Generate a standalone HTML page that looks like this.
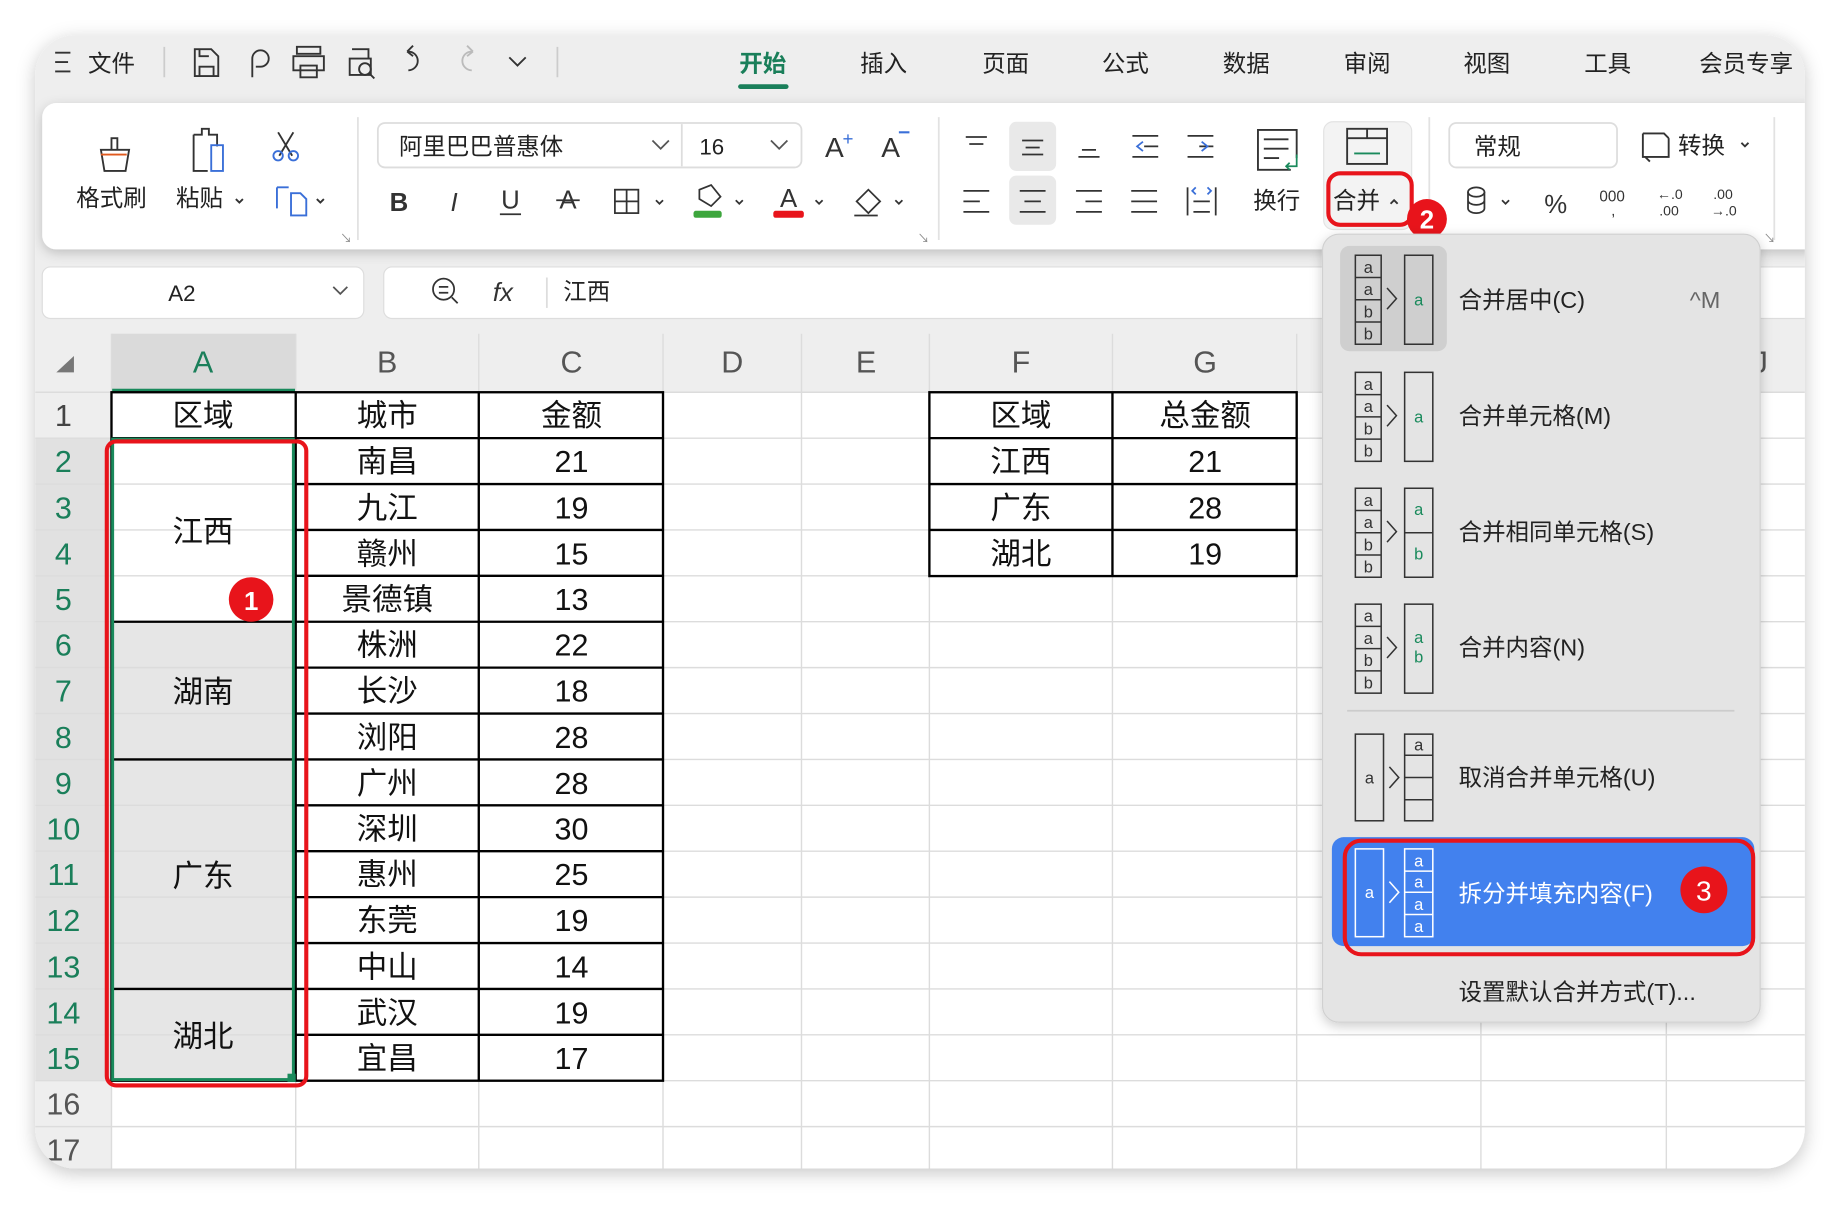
<!DOCTYPE html>
<html><head><meta charset="utf-8"><style>
html,body{margin:0;padding:0;background:#fff;width:1840px;height:1206px;overflow:hidden}
svg{display:block}
text{font-family:"Liberation Sans","Noto Sans CJK SC",sans-serif}
</style></head><body>
<svg width="1840" height="1206" viewBox="0 0 1568 1030" preserveAspectRatio="none" xmlns="http://www.w3.org/2000/svg">
<defs>
<filter id="sh" x="-5%" y="-5%" width="110%" height="110%"><feDropShadow dx="0" dy="4" stdDeviation="8" flood-color="#000" flood-opacity="0.22"/></filter>
<filter id="sh2" x="-10%" y="-10%" width="120%" height="120%"><feDropShadow dx="0" dy="3" stdDeviation="5" flood-color="#000" flood-opacity="0.2"/></filter>
<clipPath id="win"><rect x="30" y="30" width="1508" height="968" rx="34"/></clipPath>
</defs>
<rect width="1568" height="1030" fill="#fff"/>
<rect x="30" y="30" width="1508" height="968" rx="34" fill="#eeeeee" filter="url(#sh)"/>
<g clip-path="url(#win)">
<!-- grid white -->
<rect x="95" y="335" width="1450" height="670" fill="#fff"/>
<!-- row header highlight -->
<rect x="30" y="374" width="65" height="549" fill="#e1e1e1"/>
<rect x="95" y="285" width="157" height="50" fill="#dadada"/>
<rect x="95" y="332" width="157" height="3" fill="#1a8a5c"/>
<!-- merged gray cells -->
<rect x="95" y="531" width="157" height="392" fill="#e6e6e6"/>
<!-- grid lines -->
<g stroke="#dcdcdc" stroke-width="1.2">
<line x1="95" y1="285" x2="95" y2="1000"/>
<line x1="252" y1="285" x2="252" y2="1000"/><line x1="408" y1="285" x2="408" y2="1000"/><line x1="565" y1="285" x2="565" y2="1000"/><line x1="683" y1="285" x2="683" y2="1000"/><line x1="792" y1="285" x2="792" y2="1000"/><line x1="948" y1="285" x2="948" y2="1000"/><line x1="1105" y1="285" x2="1105" y2="1000"/><line x1="1262" y1="285" x2="1262" y2="1000"/><line x1="1420" y1="285" x2="1420" y2="1000"/>
<line x1="30" y1="335" x2="1540" y2="335"/>
<line x1="30" y1="374.2" x2="1540" y2="374.2"/><line x1="30" y1="413.4" x2="1540" y2="413.4"/><line x1="30" y1="452.6" x2="1540" y2="452.6"/><line x1="30" y1="491.8" x2="1540" y2="491.8"/><line x1="30" y1="531" x2="1540" y2="531"/><line x1="30" y1="570.2" x2="1540" y2="570.2"/><line x1="30" y1="609.4" x2="1540" y2="609.4"/><line x1="30" y1="648.6" x2="1540" y2="648.6"/><line x1="30" y1="687.8" x2="1540" y2="687.8"/><line x1="30" y1="727" x2="1540" y2="727"/><line x1="30" y1="766.2" x2="1540" y2="766.2"/><line x1="30" y1="805.4" x2="1540" y2="805.4"/><line x1="30" y1="844.6" x2="1540" y2="844.6"/><line x1="30" y1="883.8" x2="1540" y2="883.8"/><line x1="30" y1="923" x2="1540" y2="923"/><line x1="30" y1="962.2" x2="1540" y2="962.2"/>
</g>
<!-- table borders -->
<g stroke="#000" stroke-width="2">
<rect x="95" y="335" width="470" height="588" fill="none"/>
<line x1="252" y1="335" x2="252" y2="923"/><line x1="408" y1="335" x2="408" y2="923"/>
<line x1="252" y1="374.2" x2="565" y2="374.2"/><line x1="252" y1="413.4" x2="565" y2="413.4"/><line x1="252" y1="452.6" x2="565" y2="452.6"/><line x1="252" y1="491.8" x2="565" y2="491.8"/><line x1="95" y1="531" x2="565" y2="531"/><line x1="252" y1="570.2" x2="565" y2="570.2"/><line x1="252" y1="609.4" x2="565" y2="609.4"/><line x1="95" y1="648.6" x2="565" y2="648.6"/><line x1="252" y1="687.8" x2="565" y2="687.8"/><line x1="252" y1="727" x2="565" y2="727"/><line x1="252" y1="766.2" x2="565" y2="766.2"/><line x1="252" y1="805.4" x2="565" y2="805.4"/><line x1="95" y1="844.6" x2="565" y2="844.6"/><line x1="252" y1="883.8" x2="565" y2="883.8"/>
<line x1="95" y1="374.2" x2="252" y2="374.2"/>
<rect x="792" y="335" width="313" height="157" fill="none"/>
<line x1="948" y1="335" x2="948" y2="492"/><line x1="792" y1="374.2" x2="1105" y2="374.2"/><line x1="792" y1="413.4" x2="1105" y2="413.4"/><line x1="792" y1="452.6" x2="1105" y2="452.6"/>
</g>
<!-- selection -->
<rect x="96" y="375" width="154" height="547" fill="none" stroke="#1a8a5c" stroke-width="2.5"/>
<rect x="245" y="917" width="7" height="7" fill="#1a8a5c"/>
<rect x="91" y="377" width="170" height="550" rx="8" fill="none" stroke="#e8141b" stroke-width="3.5"/>
<!-- headers text -->
<g font-size="26" fill="#555" text-anchor="middle">
<text x="173" y="318" fill="#1a7f5a">A</text><text x="330" y="318">B</text><text x="487" y="318">C</text><text x="624" y="318">D</text><text x="738" y="318">E</text><text x="870" y="318">F</text><text x="1027" y="318">G</text><text x="1500" y="318">J</text>
</g>
<path d="M48 318 L63 304 L63 318 Z" fill="#777"/>
<g font-size="26" text-anchor="middle" fill="#1a7f5a">
<text x="54" y="364" fill="#444">1</text><text x="54" y="403">2</text><text x="54" y="443">3</text><text x="54" y="482">4</text><text x="54" y="521">5</text><text x="54" y="560">6</text><text x="54" y="599">7</text><text x="54" y="639">8</text><text x="54" y="678">9</text><text x="54" y="717">10</text><text x="54" y="756">11</text><text x="54" y="795">12</text><text x="54" y="835">13</text><text x="54" y="874">14</text><text x="54" y="913">15</text><text x="54" y="952" fill="#555">16</text><text x="54" y="991" fill="#555">17</text>
</g>
<g font-size="26" text-anchor="middle" fill="#111">
<text x="173" y="364">区域</text><text x="330" y="364">城市</text><text x="487" y="364">金额</text>
<text x="173" y="463">江西</text><text x="173" y="600">湖南</text><text x="173" y="757">广东</text><text x="173" y="894">湖北</text>
<text x="330" y="403">南昌</text><text x="487" y="403">21</text>
<text x="330" y="443">九江</text><text x="487" y="443">19</text>
<text x="330" y="482">赣州</text><text x="487" y="482">15</text>
<text x="330" y="521">景德镇</text><text x="487" y="521">13</text>
<text x="330" y="560">株洲</text><text x="487" y="560">22</text>
<text x="330" y="599">长沙</text><text x="487" y="599">18</text>
<text x="330" y="639">浏阳</text><text x="487" y="639">28</text>
<text x="330" y="678">广州</text><text x="487" y="678">28</text>
<text x="330" y="717">深圳</text><text x="487" y="717">30</text>
<text x="330" y="756">惠州</text><text x="487" y="756">25</text>
<text x="330" y="795">东莞</text><text x="487" y="795">19</text>
<text x="330" y="835">中山</text><text x="487" y="835">14</text>
<text x="330" y="874">武汉</text><text x="487" y="874">19</text>
<text x="330" y="913">宜昌</text><text x="487" y="913">17</text>
<text x="870" y="364">区域</text><text x="1027" y="364">总金额</text>
<text x="870" y="403">江西</text><text x="1027" y="403">21</text>
<text x="870" y="443">广东</text><text x="1027" y="443">28</text>
<text x="870" y="482">湖北</text><text x="1027" y="482">19</text>
</g>
<circle cx="214" cy="512" r="19" fill="#e8141b"/><text x="214" y="521" font-size="22" fill="#fff" text-anchor="middle" font-weight="bold">1</text>

<!-- title bar -->
<g font-size="20" fill="#222">
<g stroke="#333" stroke-width="1.6"><line x1="47" y1="45" x2="60" y2="45"/><line x1="47" y1="53" x2="58" y2="53"/><line x1="47" y1="61" x2="60" y2="61"/></g>
<text x="75" y="61">文件</text>
</g>
<line x1="140" y1="40" x2="140" y2="66" stroke="#ccc" stroke-width="1.5"/>
<line x1="475" y1="40" x2="475" y2="66" stroke="#ccc" stroke-width="1.5"/>
<g fill="none" stroke="#333" stroke-width="1.6">
<path d="M166 42 h14 l6 6 v17 h-20 z M170 65 v-8 h12 v8 M170 42 v6 h8"/>
<path d="M215 66 v-16 a7 7 0 1 1 7 7 h-4"/>
<path d="M253 46 h20 v-6 h-20 z M250 48 h26 v12 h-26 z M256 56 h14 v10 h-14 z"/>
<path d="M300 42 h14 v8 M298 50 h18 v14 h-18 z"/><circle cx="311" cy="59" r="5"/><path d="M315 63 l4 4"/>
<path d="M348 44 a8 8 0 1 1 0 16 M347 44 l5 -5 M347 44 l5 4" />
<path d="M402 44 a8 8 0 1 0 0 16 M403 44 l-5 -5 M403 44 l-5 4" stroke="#bbb"/>
<path d="M434 49 l7 7 l7 -7"/>
</g>
<g font-size="20" fill="#222" text-anchor="middle">
<text x="650" y="61" fill="#1a7f5a" font-weight="bold">开始</text>
<text x="753" y="61">插入</text><text x="857" y="61">页面</text><text x="959" y="61">公式</text><text x="1062" y="61">数据</text><text x="1165" y="61">审阅</text><text x="1267" y="61">视图</text><text x="1370" y="61">工具</text><text x="1488" y="61">会员专享</text>
</g>
<rect x="629" y="72" width="43" height="4" rx="2" fill="#1a7f5a"/>

<!-- ribbon -->
<rect x="36" y="88" width="1515" height="125" rx="12" fill="#fff" filter="url(#sh2)"/>
<line x1="305" y1="100" x2="305" y2="205" stroke="#e2e2e2" stroke-width="1.5"/>
<line x1="800" y1="100" x2="800" y2="205" stroke="#e2e2e2" stroke-width="1.5"/>
<line x1="1218" y1="100" x2="1218" y2="205" stroke="#e2e2e2" stroke-width="1.5"/>
<line x1="1512" y1="100" x2="1512" y2="205" stroke="#e2e2e2" stroke-width="1.5"/>
<g fill="none" stroke="#333" stroke-width="1.6">
<path d="M86 128 h24 l-3 18 h-18 z M95 128 v-10 h5 v10"/><line x1="86" y1="132" x2="108" y2="132" stroke="#e05a1e"/>
<path d="M165 115 h7 v-5 h6 v5 h7 v10 M165 115 v31 h12"/><rect x="180" y="124" width="10" height="22" stroke="#3a6fd8"/>
<path d="M237 113 l12 20 M250 113 l-12 20" /><circle cx="237" cy="133" r="4" stroke="#3a6fd8"/><circle cx="250" cy="133" r="4" stroke="#3a6fd8"/>
<path d="M236 160 h10 M236 160 v18 M248 165 h8 l5 5 v14 h-13 z" stroke="#3a6fd8"/>
<path d="M270 170 l3 3 l3 -3 M201 170 l3 3 l3 -3"/>
</g>
<g font-size="20" fill="#222">
<text x="65" y="176">格式刷</text><text x="150" y="176">粘贴</text>
</g>
<text x="290" y="207" font-size="10" fill="#888">↘</text>
<text x="782" y="207" font-size="10" fill="#888">↘</text>
<text x="1503" y="207" font-size="10" fill="#888">↘</text>
<!-- font boxes -->
<rect x="322" y="105" width="361" height="38" rx="6" fill="#fff" stroke="#ddd" stroke-width="1.5"/>
<line x1="581" y1="106" x2="581" y2="142" stroke="#ddd" stroke-width="1.5"/>
<text x="340" y="132" font-size="20" fill="#222">阿里巴巴普惠体</text>
<text x="596" y="132" font-size="19" fill="#222">16</text>
<g fill="none" stroke="#555" stroke-width="1.5"><path d="M556 120 l7 7 l7 -7 M657 120 l7 7 l7 -7 M1356 120 l7 7 l7 -7"/></g>
<text x="703" y="134" font-size="24" fill="#333">A</text><text x="718" y="124" font-size="16" fill="#3a6fd8">+</text>
<text x="751" y="134" font-size="24" fill="#333">A</text><line x1="766" y1="113" x2="775" y2="113" stroke="#3a6fd8" stroke-width="1.8"/>
<g font-size="22" fill="#333" text-anchor="middle">
<text x="340" y="180" font-weight="bold">B</text><text x="387" y="180" font-style="italic">I</text><text x="435" y="178">U</text><text x="484" y="178">A</text>
<text x="672" y="177">A</text>
</g>
<g fill="none" stroke="#333" stroke-width="1.5">
<line x1="426" y1="183" x2="444" y2="183"/><line x1="474" y1="171" x2="494" y2="171"/>
<rect x="524" y="162" width="20" height="20"/><line x1="534" y1="162" x2="534" y2="182"/><line x1="524" y1="172" x2="544" y2="172"/>
<path d="M596 162 l10 -4 l8 10 l-8 8 l-10 -6 z"/>
<path d="M730 172 l10 -10 l10 10 l-10 10 z M728 184 h20"/>
<path d="M559 171 l3 3 l3 -3 M627 171 l3 3 l3 -3 M695 171 l3 3 l3 -3 M763 171 l3 3 l3 -3"/>
</g>
<rect x="591" y="180" width="24" height="6" rx="2" fill="#3da63d"/>
<rect x="659" y="180" width="26" height="6" rx="2" fill="#e8141b"/>
<!-- alignment -->
<rect x="860" y="104" width="40" height="42" rx="6" fill="#e9e9e9"/>
<rect x="860" y="150" width="40" height="42" rx="6" fill="#e9e9e9"/>
<g stroke="#333" stroke-width="1.5">
<line x1="823" y1="117" x2="841" y2="117"/><line x1="826" y1="123" x2="838" y2="123"/>
<line x1="871" y1="120" x2="889" y2="120"/><line x1="874" y1="126" x2="886" y2="126"/><line x1="871" y1="132" x2="889" y2="132"/>
<line x1="922" y1="128" x2="934" y2="128"/><line x1="919" y1="134" x2="937" y2="134"/>
<line x1="965" y1="116" x2="987" y2="116"/><line x1="975" y1="125" x2="987" y2="125"/><line x1="965" y1="134" x2="987" y2="134"/>
<line x1="1012" y1="116" x2="1034" y2="116"/><line x1="1022" y1="125" x2="1034" y2="125"/><line x1="1012" y1="134" x2="1034" y2="134"/>
<line x1="821" y1="163" x2="843" y2="163"/><line x1="821" y1="172" x2="835" y2="172"/><line x1="821" y1="181" x2="843" y2="181"/>
<line x1="869" y1="163" x2="891" y2="163"/><line x1="873" y1="172" x2="887" y2="172"/><line x1="869" y1="181" x2="891" y2="181"/>
<line x1="917" y1="163" x2="939" y2="163"/><line x1="925" y1="172" x2="939" y2="172"/><line x1="917" y1="181" x2="939" y2="181"/>
<line x1="964" y1="163" x2="986" y2="163"/><line x1="964" y1="172" x2="986" y2="172"/><line x1="964" y1="181" x2="986" y2="181"/>
<line x1="1012" y1="160" x2="1012" y2="184"/><line x1="1036" y1="160" x2="1036" y2="184"/><line x1="1017" y1="172" x2="1031" y2="172"/><line x1="1017" y1="181" x2="1031" y2="181"/>
</g>
<g fill="none" stroke="#3a6fd8" stroke-width="1.5"><path d="M974 121 l-5 4 l5 4 M1024 121 l5 4 l-5 4 M1019 160 l-3 3 l3 3 M1029 160 l3 3 l-3 3"/></g>
<g fill="none" stroke="#333" stroke-width="1.6">
<path d="M1100 145 h-28 v-34 h33 v24"/><line x1="1077" y1="119" x2="1098" y2="119"/><line x1="1077" y1="127" x2="1098" y2="127"/><line x1="1077" y1="135" x2="1090" y2="135"/>
</g>
<path d="M1105 132 v10 h-9 M1099 139 l-3 3 l3 3" fill="none" stroke="#1a8a5c" stroke-width="1.5"/>
<text x="1088" y="178" font-size="20" fill="#222" text-anchor="middle">换行</text>
<!-- merge button -->
<rect x="1128" y="104" width="75" height="92" rx="8" fill="#f3f3f3" stroke="#e3e3e3"/>
<rect x="1148" y="110" width="34" height="30" fill="none" stroke="#333" stroke-width="1.6"/>
<line x1="1148" y1="118" x2="1182" y2="118" stroke="#333" stroke-width="1.6"/><line x1="1165" y1="110" x2="1165" y2="118" stroke="#333" stroke-width="1.6"/>
<line x1="1154" y1="131" x2="1176" y2="131" stroke="#1a8a5c" stroke-width="1.6"/>
<text x="1136" y="178" font-size="20" fill="#222">合并</text>
<path d="M1185 174 l3 -3 l3 3" fill="none" stroke="#333" stroke-width="1.6"/>
<rect x="1132" y="148" width="71" height="44" rx="10" fill="none" stroke="#e8141b" stroke-width="3.5"/>
<!-- number -->
<rect x="1235" y="105" width="143" height="38" rx="6" fill="#fff" stroke="#ddd" stroke-width="1.5"/>
<text x="1256" y="132" font-size="20" fill="#222">常规</text>
<path d="M1400 114 h18 l4 4 M1400 114 v20 h4 M1422 118 v16 h-20 l4 4" fill="none" stroke="#333" stroke-width="1.6"/>
<text x="1430" y="131" font-size="20" fill="#222">转换</text>
<path d="M1484 122 l3 3 l3 -3" fill="none" stroke="#333" stroke-width="1.6"/>
<g fill="none" stroke="#333" stroke-width="1.5"><ellipse cx="1258" cy="164" rx="7" ry="4"/><path d="M1251 164 v14 a7 4 0 0 0 14 0 v-14 M1251 171 a7 4 0 0 0 14 0 M1280 171 l3 3 l3 -3"/></g>
<text x="1316" y="182" font-size="22" fill="#333">%</text>
<text x="1363" y="172" font-size="13" fill="#333">000</text><text x="1373" y="184" font-size="13" fill="#333">,</text>
<text x="1412" y="170" font-size="12" fill="#333">←.0</text><text x="1414" y="184" font-size="12" fill="#333">.00</text>
<text x="1460" y="170" font-size="12" fill="#333">.00</text><text x="1458" y="184" font-size="12" fill="#333">→.0</text>
<circle cx="1216" cy="187" r="17" fill="#e8141b"/><text x="1216" y="195" font-size="22" fill="#fff" text-anchor="middle" font-weight="bold">2</text>

<!-- formula bar -->
<rect x="36" y="228" width="274" height="44" rx="7" fill="#fff" stroke="#ddd"/>
<text x="155" y="257" font-size="19" fill="#222" text-anchor="middle">A2</text>
<path d="M284 245 l6 6 l6 -6" fill="none" stroke="#555" stroke-width="1.5"/>
<rect x="327" y="228" width="1230" height="44" rx="7" fill="#fff" stroke="#ddd"/>
<circle cx="378" cy="247" r="9" fill="none" stroke="#333" stroke-width="1.5"/><path d="M374 245 h8 M374 250 h8 M385 254 l5 5" stroke="#333" stroke-width="1.5"/>
<text x="420" y="257" font-size="22" font-style="italic" fill="#333" font-family="Liberation Serif">fx</text>
<line x1="466" y1="237" x2="466" y2="263" stroke="#ddd" stroke-width="1.5"/>
<text x="480" y="256" font-size="20" fill="#222">江西</text>
</g>

<!-- dropdown menu -->
<rect x="1127" y="200" width="373" height="673" rx="14" fill="#e4e4e4" stroke="#d0d0d0" filter="url(#sh2)"/>
<rect x="1142" y="210" width="91" height="90" rx="8" fill="#cfcfcf"/>
<g font-size="20" fill="#222">
<text x="1243" y="263">合并居中(C)</text><text x="1440" y="263" fill="#666">^M</text>
<text x="1243" y="362">合并单元格(M)</text>
<text x="1243" y="461">合并相同单元格(S)</text>
<text x="1243" y="560">合并内容(N)</text>
<text x="1243" y="671">取消合并单元格(U)</text>
<text x="1243" y="854">设置默认合并方式(T)...</text>
</g>
<line x1="1148" y1="607" x2="1478" y2="607" stroke="#ccc" stroke-width="1.5"/>
<rect x="1135" y="715" width="360" height="93" rx="10" fill="#4281ee"/>
<text x="1243" y="770" font-size="20" fill="#fff">拆分并填充内容(F)</text>
<rect x="1146" y="718" width="348" height="97" rx="14" fill="none" stroke="#e8141b" stroke-width="3.5"/>
<circle cx="1452" cy="760" r="20" fill="#e8141b"/><text x="1452" y="769" font-size="24" fill="#fff" text-anchor="middle">3</text>
<!-- menu icons -->
<g fill="none" stroke="#333" stroke-width="1.3" font-size="13">
<!-- item1 -->
<rect x="1155" y="218" width="22" height="76"/><line x1="1155" y1="237" x2="1177" y2="237"/><line x1="1155" y1="256" x2="1177" y2="256"/><line x1="1155" y1="275" x2="1177" y2="275"/>
<path d="M1182 246 l8 9 l-8 9"/><rect x="1197" y="218" width="24" height="76"/>
<!-- item2 -->
<rect x="1155" y="318" width="22" height="76"/><line x1="1155" y1="337" x2="1177" y2="337"/><line x1="1155" y1="356" x2="1177" y2="356"/><line x1="1155" y1="375" x2="1177" y2="375"/>
<path d="M1182 346 l8 9 l-8 9"/><rect x="1197" y="318" width="24" height="76"/>
<!-- item3 -->
<rect x="1155" y="417" width="22" height="76"/><line x1="1155" y1="436" x2="1177" y2="436"/><line x1="1155" y1="455" x2="1177" y2="455"/><line x1="1155" y1="474" x2="1177" y2="474"/>
<path d="M1182 445 l8 9 l-8 9"/><rect x="1197" y="417" width="24" height="76"/><line x1="1197" y1="455" x2="1221" y2="455"/>
<!-- item4 -->
<rect x="1155" y="516" width="22" height="76"/><line x1="1155" y1="535" x2="1177" y2="535"/><line x1="1155" y1="554" x2="1177" y2="554"/><line x1="1155" y1="573" x2="1177" y2="573"/>
<path d="M1182 544 l8 9 l-8 9"/><rect x="1197" y="516" width="24" height="76"/>
<!-- item5 -->
<rect x="1155" y="627" width="24" height="74"/><path d="M1184 655 l8 9 l-8 9"/>
<rect x="1197" y="627" width="24" height="74"/><line x1="1197" y1="645" x2="1221" y2="645"/><line x1="1197" y1="664" x2="1221" y2="664"/><line x1="1197" y1="683" x2="1221" y2="683"/>
</g>
<g fill="none" stroke="#fff" stroke-width="1.3">
<rect x="1155" y="725" width="24" height="75"/><path d="M1184 753 l8 9 l-8 9"/>
<rect x="1197" y="725" width="24" height="75"/><line x1="1197" y1="744" x2="1221" y2="744"/><line x1="1197" y1="762" x2="1221" y2="762"/><line x1="1197" y1="781" x2="1221" y2="781"/>
</g>
<g font-size="14" fill="#333" text-anchor="middle">
<text x="1166" y="233">a</text><text x="1166" y="252">a</text><text x="1166" y="271">b</text><text x="1166" y="290">b</text>
<text x="1166" y="333">a</text><text x="1166" y="352">a</text><text x="1166" y="371">b</text><text x="1166" y="390">b</text>
<text x="1166" y="432">a</text><text x="1166" y="451">a</text><text x="1166" y="470">b</text><text x="1166" y="489">b</text>
<text x="1166" y="531">a</text><text x="1166" y="550">a</text><text x="1166" y="569">b</text><text x="1166" y="588">b</text>
<text x="1167" y="669">a</text><text x="1209" y="641">a</text>
</g>
<g font-size="14" fill="#1a8a5c" text-anchor="middle">
<text x="1209" y="261">a</text><text x="1209" y="361">a</text><text x="1209" y="440">a</text><text x="1209" y="478">b</text>
<text x="1209" y="549">a</text><text x="1209" y="566">b</text>
</g>
<g font-size="14" fill="#fff" text-anchor="middle">
<text x="1167" y="767">a</text><text x="1209" y="740">a</text><text x="1209" y="758">a</text><text x="1209" y="777">a</text><text x="1209" y="796">a</text>
</g>
</svg>
</body></html>
